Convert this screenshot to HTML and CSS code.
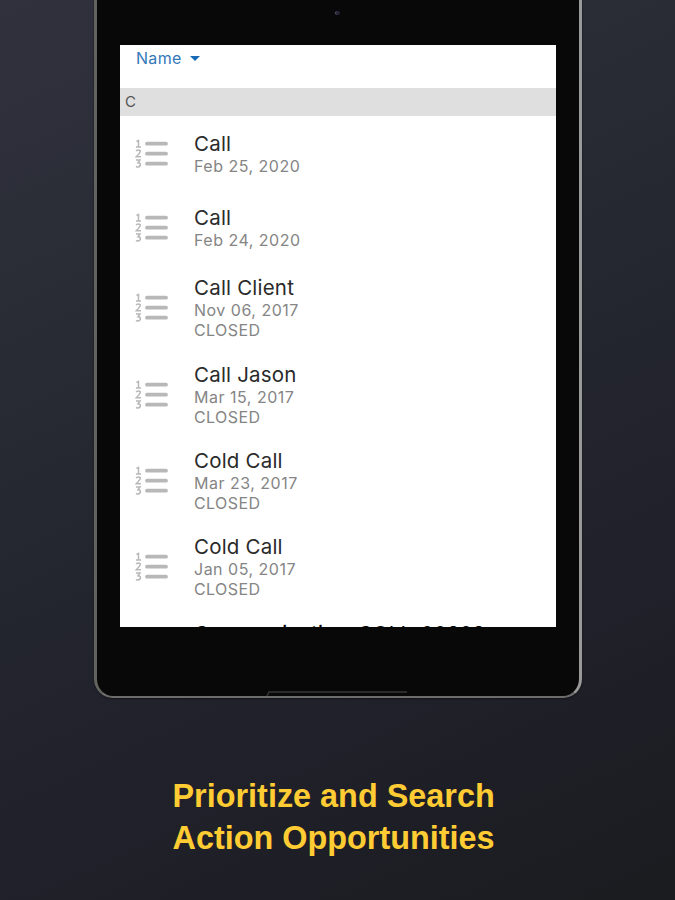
FILE: index.html
```html
<!DOCTYPE html>
<html>
<head>
    <meta charset="utf-8">
    <title>Prioritize and Search</title>
    <link rel="stylesheet" href="styles.css">
</head>
<body>
    <svg width="0" height="0" class="defs">
        <symbol id="list-icon" viewBox="0 0 34 30">
            <g fill="none" stroke="#b8b8b8" stroke-width="1.5">
                <path d="M1.5 2.5L3.5 1.5V8M1 8H6"/>
                <path d="M1 12Q3.5 10 5.3 11.8Q5.5 13.5 1.3 17.7H6"/>
                <path d="M1 21H5L3 23.8Q6 23.8 5.3 26.5Q3.5 29 1 27.3"/>
            </g>
            <path d="M12 4.7H31M12 14.7H31M12 24.7H31" stroke="#b8b8b8" stroke-width="3.8" stroke-linecap="round"/>
        </symbol>
    </svg>
    <div class="tablet">
        <div class="camera"></div>
        <div class="screen">
            <div class="sort">Name <span class="arrow"></span></div>
            <div class="section">C</div>
            <div class="row short">
                <svg class="icon"><use href="#list-icon"/></svg>
                <div class="info">
                    <div class="name">Call</div>
                    <div class="sub">Feb 25, 2020</div>
                </div>
            </div>
            <div class="row short">
                <svg class="icon"><use href="#list-icon"/></svg>
                <div class="info">
                    <div class="name">Call</div>
                    <div class="sub">Feb 24, 2020</div>
                </div>
            </div>
            <div class="row">
                <svg class="icon"><use href="#list-icon"/></svg>
                <div class="info">
                    <div class="name">Call Client</div>
                    <div class="sub">Nov 06, 2017</div>
                    <div class="sub status">CLOSED</div>
                </div>
            </div>
            <div class="row">
                <svg class="icon"><use href="#list-icon"/></svg>
                <div class="info">
                    <div class="name">Call Jason</div>
                    <div class="sub">Mar 15, 2017</div>
                    <div class="sub status">CLOSED</div>
                </div>
            </div>
            <div class="row">
                <svg class="icon"><use href="#list-icon"/></svg>
                <div class="info">
                    <div class="name">Cold Call</div>
                    <div class="sub">Mar 23, 2017</div>
                    <div class="sub status">CLOSED</div>
                </div>
            </div>
            <div class="row">
                <svg class="icon"><use href="#list-icon"/></svg>
                <div class="info">
                    <div class="name">Cold Call</div>
                    <div class="sub">Jan 05, 2017</div>
                    <div class="sub status">CLOSED</div>
                </div>
            </div>
            <div class="row next">
                <div class="name">Communication COLL-00202</div>
            </div>
        </div>
        <svg class="notch" width="144" height="5" viewBox="0 0 144 5">
            <path d="M1 5L3 1H141" fill="none" stroke="#363636" stroke-width="1.5"/>
        </svg>
    </div>
    <h1 class="caption">Prioritize and Search<br>Action Opportunities</h1>
</body>
</html>
```
FILE: styles.css
```css
html, body {
    height: 100%;
    margin: 0;
    padding: 0;
}
body {
    display: flex;
    flex-direction: column;
    overflow: hidden;
    background: linear-gradient(155deg, #30313d 0%, #272a33 35%, #20212a 70%, #1b1c20 100%);
    font-family: Inter, "Liberation Sans", sans-serif;
}
.defs {
    position: absolute;
}
.tablet {
    box-sizing: border-box;
    position: relative;
    width: 488px;
    height: 698px;
    flex: none;
    margin-left: 94px;
    padding: 45px 23px 0;
    border: solid #666;
    border-width: 0 3px 2px;
    border-color: #666 #999 #6c6c6c #62625f;
    border-radius: 0 0 19px 19px;
    background-color: #080808;
    box-shadow: 0 1px 2px #15151a;
}
.camera {
    position: absolute;
    left: 238px;
    top: 11px;
    width: 4px;
    height: 4px;
    border-radius: 50%;
    border-left: 1px solid #5c5870;
    background-color: #282438;
}
.screen {
    width: 436px;
    height: 582px;
    overflow: hidden;
    background-color: #fff;
}
.sort {
    display: flex;
    align-items: center;
    box-sizing: border-box;
    height: 43px;
    padding: 0 0 17px 16px;
    color: #3478b8;
    font-size: 16px;
    letter-spacing: 0.3px;
}
.arrow {
    margin-left: 8px;
    border: 5px solid transparent;
    border-top-color: #1769b5;
    border-bottom: none;
}
.section {
    height: 28px;
    margin-bottom: 1px;
    padding-left: 5px;
    background-color: #dfdfdf;
    color: #555;
    font-size: 15px;
    line-height: 28px;
}
.row {
    display: flex;
    align-items: center;
    height: 86.4px;
    padding-left: 15px;
}
.row.short {
    height: 74px;
}
.icon {
    width: 34px;
    height: 30px;
    margin-right: 25px;
}
.info {
    padding-bottom: 2px;
    white-space: nowrap;
}
.name {
    padding-top: 1px;
    color: #2a2a2a;
    font-size: 20.5px;
    line-height: 25px;
    letter-spacing: 0.2px;
}
/* next row, only its top edge shows at the bottom of the screen */
.row.next {
    align-items: flex-start;
    padding: 9px 0 0 74px;
}
.next .name {
    color: #000;
    white-space: nowrap;
    letter-spacing: 0.15px;
    word-spacing: 4px;
}
.sub {
    color: #858585;
    font-size: 16px;
    line-height: 20px;
    letter-spacing: 0.5px;
}
.status {
    letter-spacing: 0.4px;
}
.notch {
    position: absolute;
    left: 169px;
    bottom: 0;
}
.caption {
    margin: 77px 0 0 172.5px;
    color: #fc3;
    font: bold 32.4px/42px "Liberation Sans", Arial, sans-serif;
}
```
